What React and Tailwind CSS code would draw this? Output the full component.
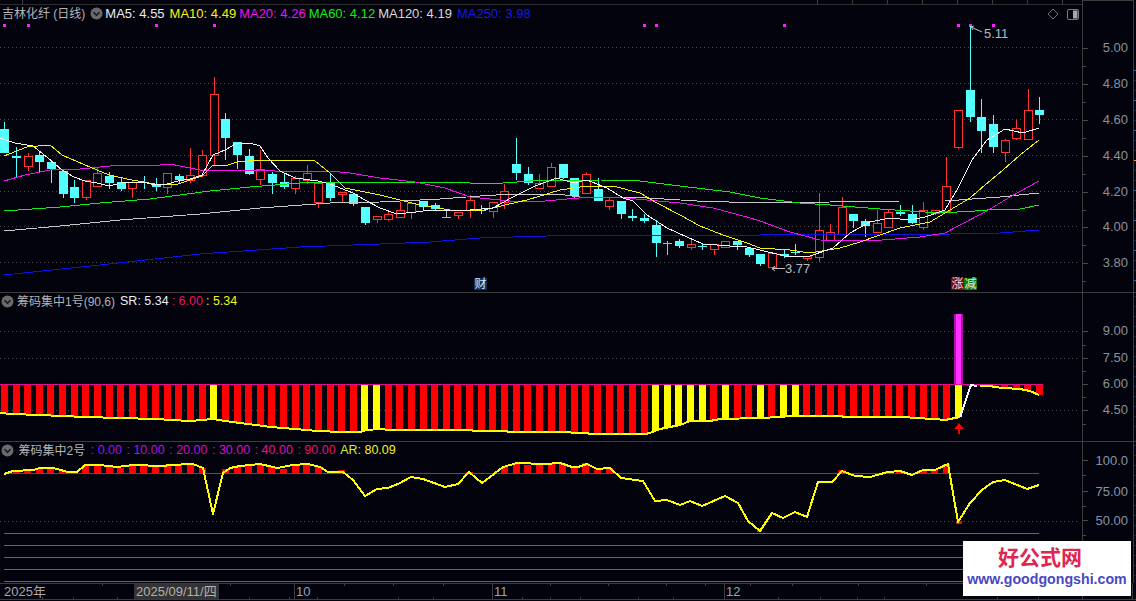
const cx = (i) => 4.4 + 11.63 * i;

// [kind (1 red, 0 cyan, 2 gray), high, top, bottom, low] in page pixels
const candles = [
  [0,122,129,153,153],[0,147,156,158,178],[1,153,156,166,171],[0,152,155,162,172],[0,160,162,169,183],
  [0,171,171,194,198],[0,180,187,198,203],[1,180,180,197,200],[1,167,173,186,187],[0,172,176,183,189],
  [0,177,182,189,191],[1,180,182,188,198],[0,176,182,183,189],[0,178,184,187,191],[1,173,173,187,194],
  [0,174,176,180,184],[1,148,175,180,183],[1,150,155,175,177],[1,77,94,155,165],[0,113,119,138,160],
  [0,142,142,155,169],[0,149,156,174,175],[1,150,169,179,185],[0,172,174,183,194],[0,174,182,187,189],
  [1,176,178,188,194],[1,165,173,180,184],[1,183,183,202,208],[0,173,183,198,201],[1,192,192,194,203],
  [0,194,194,204,206],[0,207,207,223,225],[1,216,216,219,223],[1,211,214,219,221],[1,202,210,217,218],
  [1,203,203,212,219],[0,201,201,207,211],[0,203,205,209,211],[2,211,217,218,218],[1,212,212,215,219],
  [1,195,200,210,218],[0,205,210,211,214],[1,202,202,211,218],[1,184,191,202,209],[0,138,164,173,180],
  [0,167,174,183,185],[1,174,183,188,188],[1,163,167,186,187],[0,164,164,178,179],[0,178,178,196,198],
  [1,172,174,193,194],[0,178,189,201,201],[1,197,200,206,210],[0,201,201,214,219],[0,209,216,218,221],
  [0,214,218,221,223],[0,220,225,243,257],[2,241,243,243,255],[0,239,241,246,248],[1,240,244,247,250],
  [0,243,246,247,250],[1,244,244,249,255],[1,241,241,247,248],[0,241,241,245,250],[0,248,248,255,257],
  [0,254,254,264,266],[1,253,253,267,270],[0,250,254,256,258],[0,244,252,253,255],[1,256,256,258,261],
  [1,193,230,257,262],[1,224,232,240,240],[1,197,207,234,234],[0,214,214,221,228],[0,219,221,226,237],
  [1,210,223,232,232],[1,210,212,227,227],[0,205,212,214,216],[0,205,214,223,224],[1,202,210,227,230],
  [1,210,210,213,215],[1,157,186,211,211],[1,110,110,147,149],[0,26,90,117,122],[0,99,117,131,153],
  [0,115,124,147,153],[1,139,140,152,162],[1,120,128,138,140],[1,89,110,139,139],[0,97,110,115,124],
];

const ma5 = "0,138 15,143 33,146 48,158 62,170 74,177 85,181 97,183 109,186 125,182 143,182 155,185 167,184 178,181 190,179 202,175 213,155 225,150 237,143 250,143 260,146 268,158 280,171 295,178 318,181 330,184 353,193 365,200 380,208 397,214 416,212 430,210 447,211 470,210 493,208 513,197 535,186 557,178 573,183 587,180 607,188 623,198 633,201 647,215 667,228 687,237 703,244 730,246 747,247 760,250 785,256 810,256 833,248 850,233 870,222 890,218 910,220 925,217 945,210 957,190 972,160 987,140 1005,129 1023,133 1039,128";
const ma10 = "4,156 27,147 50,145 62,155 85,165 109,175 132,180 155,184 178,184 202,176 213,165 225,166 237,162 260,160 283,160 315,161 330,173 345,188 380,195 420,205 450,210 480,211 505,205 527,200 560,190 587,186 613,186 640,193 657,203 680,215 700,226 723,235 747,243 760,248 790,250 810,253 840,248 860,242 880,235 900,228 930,222 950,210 970,198 985,185 1003,170 1020,155 1039,140";
const ma20 = "4,181 25,175 50,170 80,169 120,165 160,165 170,164 200,170 225,170 260,170 290,172 330,171 350,173 380,178 415,182 445,188 470,197 510,201 545,201 590,197 613,197 647,200 680,203 713,208 747,217 760,221 790,232 820,240 870,241 920,237 945,233 960,225 985,212 1010,197 1039,181";
const ma60 = "4,211 60,207 100,203 150,199 210,191 250,187 300,183 340,182 380,182 450,182 490,184 530,181 600,180 640,181 680,186 730,192 760,198 800,203 830,205 880,209 940,213 975,211 1000,209 1020,209 1039,205";
const ma120 = "4,231 60,226 120,220 200,214 260,208 330,203 380,202 440,199 480,196 513,194 557,194 580,197 647,198 697,201 760,203 900,201 945,201 1000,197 1039,193";
const ma250 = "4,275 100,265 200,254 300,247 380,244 430,242 480,238 547,236 760,235 950,234 1000,233 1039,230";

const srLine = [[0,413],[12,414],[40,415],[62,416],[85,417],[120,418],[155,419],[190,421],[202,420],[213,419],[225,421],[248,424],[271,427],[295,429],[318,431],[341,432],[360,432],[366,430],[380,429],[390,430],[470,430],[475,431],[505,431],[510,432],[555,432],[587,433],[590,434],[645,434],[650,433],[660,429],[680,425],[690,421],[710,421],[720,419],[760,418],[780,417],[790,416],[840,416],[845,417],[905,417],[915,418],[935,419],[945,420],[955,418],[960,417]];
const srTail = [[980,386],[990,386],[995,387],[1003,388],[1020,389],[1030,391],[1039,395]];
const yellowBars = [18, 31, 32, 56, 57, 58, 59, 60, 62, 65, 67, 68, 82];

const arLine = "4,474 13,471 33,470 40,468 53,468 68,472 77,472 85,465 100,465 117,467 133,465 163,466 170,465 193,464 203,468 213,514 223,473 230,468 240,466 260,464 277,468 293,465 308,464 320,467 328,472 343,472 353,480 365,496 377,489 388,488 400,483 411,477 423,479 445,487 458,484 469,472 482,483 490,477 503,467 517,463 545,464 560,463 572,467 578,467 587,464 597,469 610,468 621,478 643,481 655,501 667,500 680,505 690,501 702,506 725,496 738,503 748,521 760,531 772,513 783,518 795,512 807,517 818,482 832,482 842,471 855,476 870,477 888,472 900,471 912,475 923,470 935,470 948,464 958,522 970,503 982,490 993,482 1005,480 1027,489 1039,485";
const arBars = [[1,470],[2,471],[3,468],[4,467],[5,470],[7,465],[8,465],[9,466],[10,468],[11,465],[12,466],[13,467],[14,465],[15,465],[16,464],[17,468],[19,469],[20,466],[21,465],[22,464],[23,467],[24,469],[25,465],[26,464],[27,467],[29,470],[40,472],[43,467],[44,463],[45,465],[46,465],[47,463],[48,463],[49,468],[50,463],[51,470],[52,468],[72,470],[76,471],[77,471],[79,470],[80,470],[81,464]];

const yAt = (pts, x) => {
  if (x <= pts[0][0]) return pts[0][1];
  for (let k = 1; k < pts.length; k++) {
    if (x <= pts[k][0]) {
      const [x0, y0] = pts[k - 1];
      const [x1, y1] = pts[k];
      return y0 + ((y1 - y0) * (x - x0)) / (x1 - x0);
    }
  }
  return pts[pts.length - 1][1];
};

const ChevronDot = () => (
  <svg width="13" height="13" viewBox="0 0 13 13" className="shrink-0">
    <circle cx="6.5" cy="6.5" r="6" fill="#6a6a6a" />
    <path d="M3.5 5.2 6.5 8.2 9.5 5.2" fill="none" stroke="#16161c" strokeWidth="1.6" />
  </svg>
);

const Grid = ({ ys, x2 = 1078 }) =>
  ys.map((y) => (
    <line key={y} x1="0" x2={x2} y1={y + 0.5} y2={y + 0.5} stroke="#4a4a4a" strokeDasharray="1 3" />
  ));

const Candle = ({ c, i }) => {
  const [kind, high, top, bottom, low] = c;
  const x = Math.round(cx(i)) + 0.5;
  const color = kind === 1 ? "#ff3232" : kind === 0 ? "#54ffff" : "#b8b8b8";
  return (
    <g shapeRendering="crispEdges">
      <line x1={x} x2={x} y1={high} y2={top} stroke={color} />
      <line x1={x} x2={x} y1={bottom} y2={low} stroke={color} />
      {kind === 1 ? (
        <rect x={x - 4} y={top + 0.5} width="8" height={Math.max(bottom - top, 1)} fill="#03030e" stroke={color} />
      ) : (
        <rect x={x - 4.5} y={top} width="9" height={Math.max(bottom - top, 1)} fill={color} />
      )}
    </g>
  );
};

const Line = ({ points, color, width = 1 }) => (
  <polyline points={points} fill="none" stroke={color} strokeWidth={width} strokeLinejoin="round" shapeRendering="crispEdges" />
);

const Axis = ({ top, height, labels, ticks, color = "#8b9198", dy = 3.5 }) => (
  <svg width="50" height={height} viewBox={`1082 ${top} 50 ${height}`} className="block shrink-0">
    {ticks.map((y) => (
      <line key={y} x1="1082" x2="1085" y1={y + 0.5} y2={y + 0.5} stroke="#4a4a4a" />
    ))}
    {labels.map(([text, y]) => (
      <g key={text}>
        <line x1="1082" x2="1087" y1={y + 0.5} y2={y + 0.5} stroke="#4a4a4a" />
        <text x="1127" y={y + dy} textAnchor="end" fontSize="13" fill={color}>
          {text}
        </text>
      </g>
    ))}
  </svg>
);

const EdgeStrip = ({ marks, className }) => (
  <div className={`flex w-[3px] shrink-0 flex-col gap-[9px] overflow-hidden border-l border-[#3c3c3c] box-content ${className}`}>
    {marks.map((m, k) => (
      <div key={k} className="h-px w-full shrink-0" style={{ background: m }} />
    ))}
  </div>
);

const stripMarks = (n) => Array.from({ length: n }, (_, k) => (k === 9 ? "#e8a030" : k % 3 === 0 ? "#2a6aa8" : "#12263e"));

const PriceChart = () => (
  <svg width="1082" height="292" viewBox="0 0 1082 292" className="block">
    <line x1="0" x2="1082" y1="4.5" y2="4.5" stroke="#2c2c2c" />
    {[22, 817, 852, 887, 922, 957, 992, 1027, 1062].map((x) => (
      <line key={x} x1={x + 0.5} x2={x + 0.5} y1="0" y2="4" stroke="#3c3c3c" />
    ))}
    <Grid ys={[47, 83, 119, 155, 191, 226, 262]} />
    {[0, 2, 13, 18, 55, 56, 67, 82, 83, 85].map((i) => (
      <rect key={i} x={Math.round(cx(i)) - 1} y="24" width="3" height="3" fill="#ff20ff" />
    ))}
    {candles.map((c, i) => (
      <Candle key={i} c={c} i={i} />
    ))}
    <Line points={ma250} color="#1010e8" />
    <Line points={ma120} color="#c8c8c8" />
    <Line points={ma60} color="#10ee10" />
    <Line points={ma20} color="#f010f0" />
    <Line points={ma10} color="#f4f410" />
    <Line points={ma5} color="#f4f4f4" />
    <path d="M982 32 971 27 M971 27 974 26 M971 27 973 30" fill="none" stroke="#c0c0c0" />
    <text x="984" y="38" fontSize="13" fill="#b4bcc4">5.11</text>
    <path d="M785 268.5H772 M772 268.5 775 266 M772 268.5 775 271" fill="none" stroke="#c0c0c0" />
    <text x="785" y="273" fontSize="13" fill="#b4bcc4">3.77</text>
    <path d="M1053 9 1058 14 1053 19 1048 14Z" fill="none" stroke="#6f6f6f" />
    <rect x="1067.5" y="9.5" width="11" height="10" rx="1.5" fill="none" stroke="#7a7a7a" />
    <rect x="1073" y="10.5" width="4.5" height="8" fill="#a8a8a8" />
  </svg>
);

const ChipChartOne = () => (
  <svg width="1082" height="148" viewBox="0 293 1082 148" className="block">
    <Grid ys={[331, 358, 410]} />
    {candles.map((_, i) => {
      const x = cx(i);
      const isYellow = yellowBars.includes(i);
      const bottom = i <= 82 ? yAt(srLine, x) : yAt(srTail, x);
      return (
        <rect
          key={i}
          x={Math.round(x - 3.5)}
          y="384"
          width="7"
          height={Math.max(bottom - 384, 1)}
          fill={isYellow ? "#ffff00" : "#ff0000"}
          shapeRendering="crispEdges"
        />
      );
    })}
    <line x1="0" x2="1043" y1="384.5" y2="384.5" stroke="#e01090" />
    <rect x="954" y="314" width="9" height="70" fill="#b010b0" shapeRendering="crispEdges" />
    <rect x="956" y="314" width="5" height="70" fill="#ff30ff" shapeRendering="crispEdges" />
    <Line points={srLine.map((p) => p.join(",")).join(" ")} color="#ffff00" width="2" />
    <Line points={srTail.map((p) => p.join(",")).join(" ")} color="#ffff00" width="2" />
    <Line points="960,417 971,385 977,386" color="#ffffff" width="2" />
    <path d="M959 423 964 429H960V434H958V429H954Z" fill="#ff0000" />
  </svg>
);

const ChipChartTwo = () => (
  <svg width="1082" height="141" viewBox="0 442 1082 141" className="block">
    <Grid ys={[521]} />
    <line x1="4" x2="1039" y1="473.5" y2="473.5" stroke="#d01060" />
    {[533, 545, 557, 569, 581].map((y) => (
      <line key={y} x1="4" x2="1039" y1={y + 0.5} y2={y + 0.5} stroke="#e010d8" />
    ))}
    {arBars.map(([i, top]) => (
      <rect key={i} x={Math.round(cx(i) - 3.5)} y={top} width="7" height={473 - top} fill="#ff0000" shapeRendering="crispEdges" />
    ))}
    <rect x="956" y="521" width="6" height="3" fill="#ff0000" />
    <rect x="757" y="529" width="5" height="3" fill="#ff0000" />
    <Line points={arLine} color="#ffff00" width="2" />
  </svg>
);

const DateAxis = () => (
  <svg width="1136" height="18" viewBox="0 583 1136 18" className="block">
    <line x1="0" x2="1132" y1="583.5" y2="583.5" stroke="#3c3c3c" />
    <line x1="0" x2="1136" y1="599.5" y2="599.5" stroke="#3c3c3c" />
    {[102, 230, 344, 393, 443, 550, 608, 666, 705, 750, 792, 858, 926].map((x) => (
      <line key={x} x1={x + 0.5} x2={x + 0.5} y1="584" y2="586" stroke="#3c3c3c" />
    ))}
    {[42, 73, 117, 177, 249, 289, 317, 398, 433, 522, 550, 580, 638, 673, 778, 820, 857, 884, 997, 1038].map((x) => (
      <line key={x} x1={x + 0.5} x2={x + 0.5} y1="597" y2="599" stroke="#3c3c3c" />
    ))}
    {[294, 492, 724, 1082, 1132].map((x) => (
      <line key={x} x1={x + 0.5} x2={x + 0.5} y1="584" y2="599" stroke="#3c3c3c" />
    ))}
    <rect x="134" y="584" width="85" height="15" fill="#333333" />
    <text x="4" y="596" fontSize="13" fill="#a8a8a8">2025年</text>
    <text x="136" y="596" fontSize="13" fill="#b0b0b0">2025/09/11/四</text>
    <text x="296" y="596" fontSize="13" fill="#9aa4ae">10</text>
    <text x="494" y="596" fontSize="13" fill="#9aa4ae">11</text>
    <text x="726" y="596" fontSize="13" fill="#9aa4ae">12</text>
  </svg>
);

const MaValue = ({ name, value, color, className = "" }) => (
  <span className={`${color} ${className}`}>
    {name}: {value}
  </span>
);

const App = () => {
  return (
    <div className="relative flex h-[601px] w-[1136px] flex-col overflow-hidden bg-[#03030e] font-['Liberation_Sans','Noto_Sans_CJK_SC',sans-serif] text-[13px] leading-none">
      {/* price panel */}
      <div className="flex h-[292px] shrink-0">
        <div className="relative w-[1082px] shrink-0">
          <PriceChart />
          <div className="absolute left-[2px] top-[7px] flex items-center whitespace-nowrap">
            <span className="text-[12px] text-[#b4b4b4]">吉林化纤 (日线)</span>
            <span className="ml-[5px] mr-[2px]"><ChevronDot /></span>
            <div className="flex gap-[3px]">
              <MaValue name="MA5" value="4.55" color="text-[#e8eef2]" />
              <MaValue name="MA10" value="4.49" color="text-[#f4f410]" className="ml-[2px]" />
              <MaValue name="MA20" value="4.26" color="text-[#f010f0]" />
              <MaValue name="MA60" value="4.12" color="text-[#10ee10]" />
              <MaValue name="MA120" value="4.19" color="text-[#d8d8d8]" />
              <MaValue name="MA250" value="3.98" color="text-[#1818e0]" className="ml-[2px]" />
            </div>
          </div>
          <span className="absolute left-[474px] top-[278px] flex h-[12px] w-[13px] items-center justify-center bg-[#0f3560] text-[12px] text-[#d8e8f8]">财</span>
          <span className="absolute left-[951px] top-[278px] flex h-[12px] w-[13px] items-center justify-center bg-[#7a0c0c] text-[12px] text-[#f0d8d8]">涨</span>
          <span className="absolute left-[964px] top-[278px] flex h-[12px] w-[13px] items-center justify-center bg-[#0c7a0c] text-[12px] text-[#e0f0e0]">减</span>
        </div>
        <div className="border-t border-l border-[#3c3c3c]">
          <Axis
            top={0}
            height={292}
            labels={[["5.00", 47], ["4.80", 83], ["4.60", 119], ["4.40", 155], ["4.20", 191], ["4.00", 226], ["3.80", 262]]}
            ticks={[65, 101, 137, 173, 209, 244, 280]}
          />
        </div>
        <EdgeStrip marks={stripMarks(22)} className="pt-[70px]" />
      </div>

      {/* chip indicator 1 */}
      <div className="flex h-[149px] shrink-0 border-t border-[#3c3c3c]">
        <div className="relative w-[1082px] shrink-0">
          <ChipChartOne />
          <div className="absolute left-px top-[2px] flex items-center gap-[3px] whitespace-nowrap text-[12.5px]">
            <ChevronDot />
            <span className="text-[12px] text-[#b4b4b4]">筹码集中1号(90,6)</span>
            <span className="ml-[2px] text-[#e8eef2]">SR: 5.34</span>
            <span className="text-[#f01060]">: 6.00</span>
            <span className="text-[#f4f410]">: 5.34</span>
          </div>
        </div>
        <div className="border-l border-[#3c3c3c]">
          <Axis top={293} height={148} labels={[["9.00", 331], ["7.50", 358], ["6.00", 384], ["4.50", 410]]} ticks={[345, 371, 397, 424]} />
        </div>
        <EdgeStrip marks={stripMarks(14).map(() => "#12263e")} className="pt-[3px]" />
      </div>

      {/* chip indicator 2 */}
      <div className="flex h-[142px] shrink-0 border-t border-[#3c3c3c]">
        <div className="relative w-[1082px] shrink-0">
          <ChipChartTwo />
          <div className="absolute left-px top-[2px] flex items-center gap-[4.5px] whitespace-nowrap text-[12.5px]">
            <ChevronDot />
            <span className="text-[12px] text-[#b4b4b4]">筹码集中2号</span>
            <span className="ml-[1px] text-[#a010f8]">: 0.00</span>
            <span className="text-[#b810e8]">: 10.00</span>
            <span className="text-[#c810d8]">: 20.00</span>
            <span className="text-[#d810c8]">: 30.00</span>
            <span className="text-[#e010b0]">: 40.00</span>
            <span className="text-[#e81070]">: 90.00</span>
            <span className="text-[#d0f040]">AR: <span className="text-[#f4f410]">80.09</span></span>
          </div>
        </div>
        <div className="border-l border-[#3c3c3c]">
          <Axis top={442} height={141} labels={[["100.0", 460], ["75.00", 491], ["50.00", 520]]} ticks={[475, 506, 535]} color="#8496a8" dy={5} />
        </div>
        <EdgeStrip marks={stripMarks(14).map(() => "#12263e")} className="pt-[3px]" />
      </div>

      <DateAxis />

      {/* watermark */}
      <div className="absolute left-[963px] top-[541px] flex h-[55px] w-[168px] flex-col items-center justify-center gap-[4px] bg-white pb-[3px]">
        <span className="mr-[14px] text-[21px] font-bold text-[#e0264e]">好公式网</span>
        <span className="whitespace-nowrap text-[14.2px] font-bold text-[#4a48c0]">www.goodgongshi.com</span>
      </div>
    </div>
  );
};

export default App;
